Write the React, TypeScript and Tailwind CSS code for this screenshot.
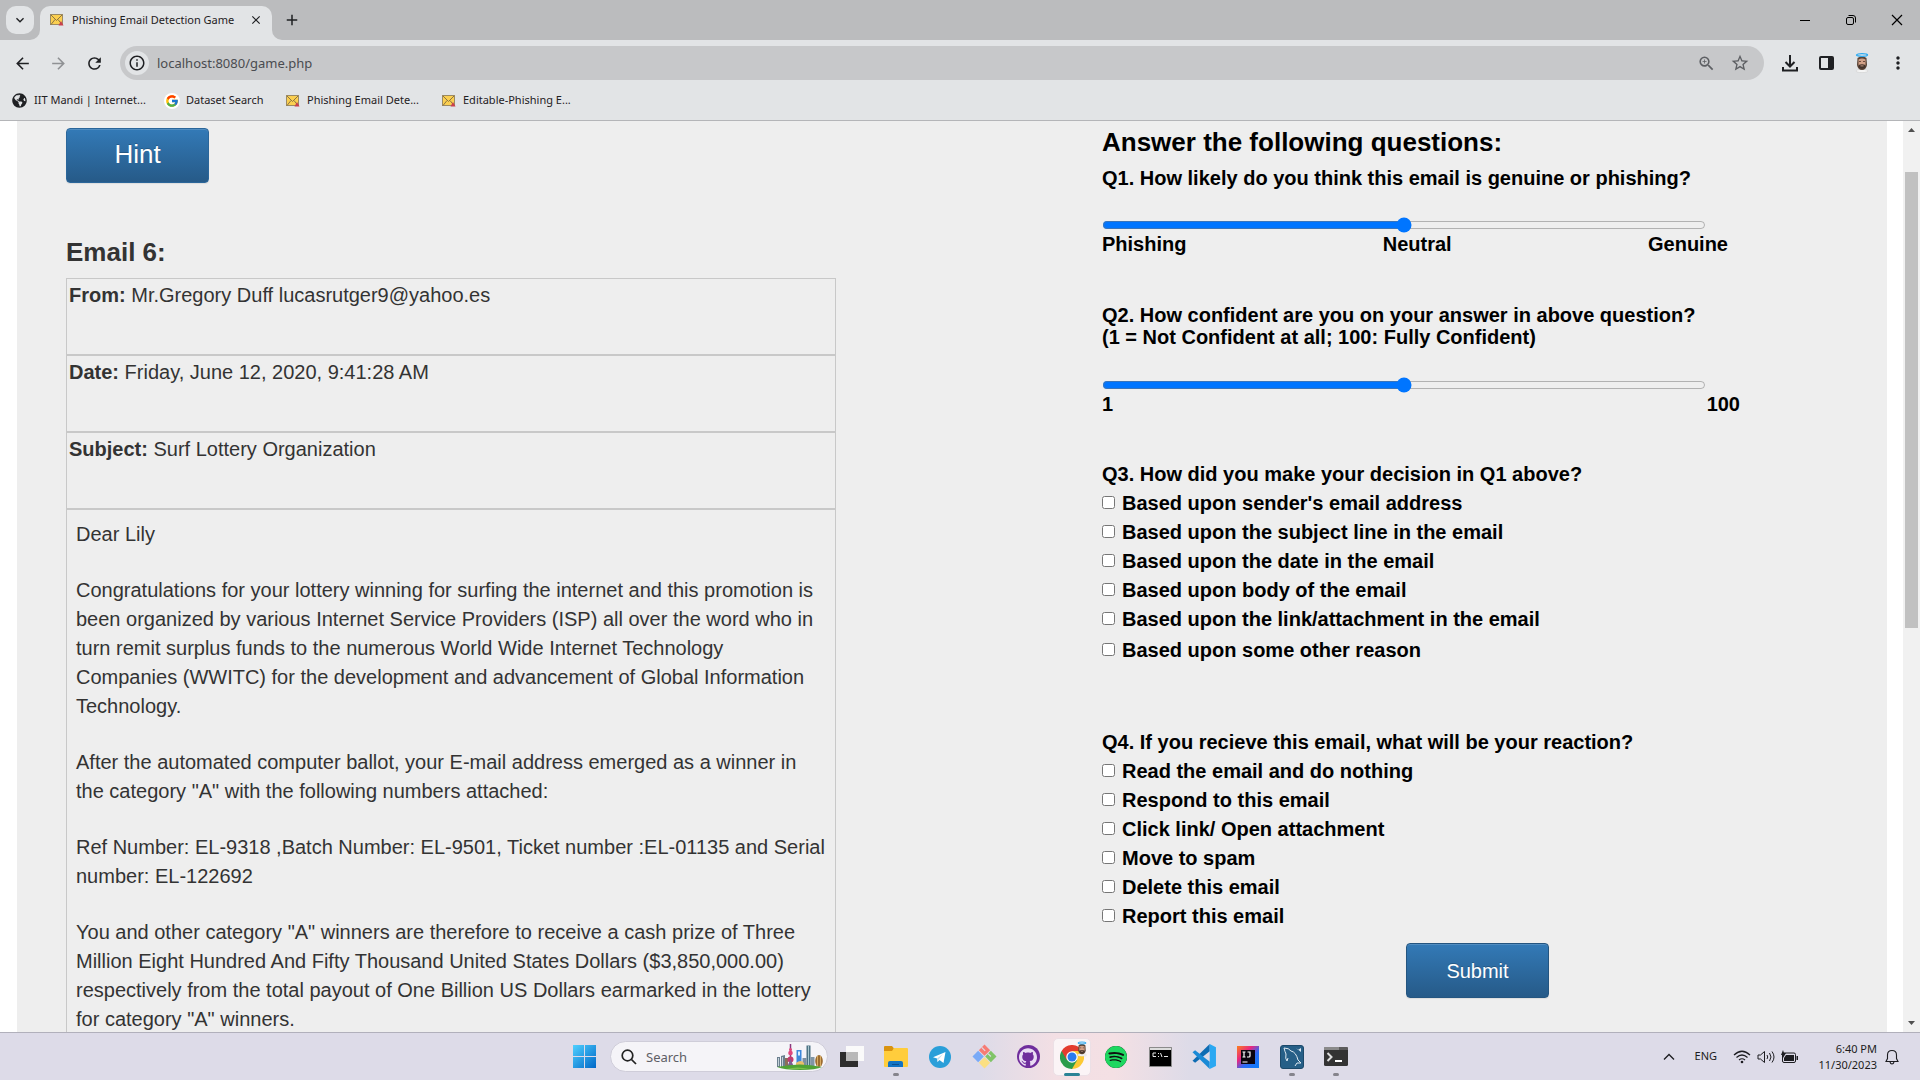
import React from "react";
import { SiSpotify, SiGithub } from "react-icons/si";
import { FcGoogle } from "react-icons/fc";
import { FaGlobeAmericas } from "react-icons/fa";
import {
  MdArrowBack,
  MdArrowForward,
  MdRefresh,
  MdInfoOutline,
  MdOutlineZoomIn,
  MdStarOutline,
  MdMoreVert,
  MdClose,
  MdAdd,
  MdExpandMore,
} from "react-icons/md";

const ui = "font-['Noto_Sans','Open_Sans',sans-serif]";

function MailIcon() {
  return (
    <svg width="14" height="14" viewBox="0 0 14 14" className="shrink-0">
      <rect x="0.5" y="1.5" width="12" height="10" fill="#fbcf50" stroke="#9c8a62" />
      <path d="M1 2l5.500 5.500L12 2M1 11.500l4-5M12 11.500l-4-5" fill="none" stroke="#8b7444" strokeWidth="1" />
      <path d="M11 8l2.500 4.500H8.500z" fill="#c9404d" />
    </svg>
  );
}

function Avatar({ className }: { className?: string }) {
  return (
    <svg width="16" height="20" viewBox="0 0 16 20" className={className}>
      <ellipse cx="8" cy="18" rx="6" ry="1.600" fill="#f5f5f5" stroke="#c9c9c9" strokeWidth="0.500" />
      <path d="M3.500 5q4.500-3.500 9 0l.5 7q-1 5-5 5t-5-5z" fill="#5a4437" />
      <path d="M4.500 6.500q3.500-2 7 0v6q-1 2-3.500 2t-3.500-2z" fill="#d3a188" />
      <path d="M4.500 12q3.500-1.500 7 0v2q-3.500 3.500-7 0z" fill="#43332b" />
      <rect x="5" y="8" width="2" height="1" fill="#6b4a3c" />
      <rect x="9" y="8" width="2" height="1" fill="#6b4a3c" />
      <rect x="6.500" y="12.500" width="3" height="0.800" fill="#d9a890" />
      <ellipse cx="8" cy="2" rx="5.500" ry="1.300" fill="none" stroke="#29a9f2" strokeWidth="1.300" />
    </svg>
  );
}

function TabStrip() {
  return (
    <div className="flex h-10 items-start bg-[#bbbcbe] pt-1.5 pl-1.5 text-[#1f2023]">
      <button aria-label="Search tabs" className="grid size-7 place-items-center rounded-[10px] bg-[#e2e4e6]">
        <MdExpandMore size={16} stroke="currentColor" />
      </button>
      <div className="relative ml-1.5 flex h-[34px] w-[232px] items-center rounded-t-[10px] bg-[#e2e4e6] pr-[9px] pb-1.5 pl-2.5">
        <svg width="10" height="10" className="absolute bottom-0 -left-2.5">
          <path d="M10 0v10H0A10 10 0 0 0 10 0z" fill="#e2e4e6" />
        </svg>
        <svg width="10" height="10" className="absolute -right-2.5 bottom-0">
          <path d="M0 0v10h10A10 10 0 0 1 0 0z" fill="#e2e4e6" />
        </svg>
        <MailIcon />
        <span className="ml-2 flex-1 text-[11px] whitespace-nowrap">Phishing Email Detection Game</span>
        <button aria-label="Close tab">
          <MdClose size={14} />
        </button>
      </div>
      <button aria-label="New tab" className="mt-[5px] ml-[11px]">
        <MdAdd size={18} />
      </button>
      <div className="mr-[15px] ml-auto flex items-center gap-[30px] pt-1.5">
        <button aria-label="Minimize">
          <svg width="16" height="16" viewBox="0 0 16 16">
            <path d="M3 8.500h10" stroke="#000" />
          </svg>
        </button>
        <button aria-label="Restore">
          <svg width="16" height="16" viewBox="0 0 16 16" fill="none" stroke="#000">
            <rect x="3.500" y="5.500" width="7" height="7" rx="1.500" />
            <path d="M5.500 3.500h4.500q2.500 0 2.500 2.500v4.500" />
          </svg>
        </button>
        <button aria-label="Close">
          <svg width="16" height="16" viewBox="0 0 16 16" stroke="#000" strokeWidth="1.200">
            <path d="M3 3l10 10M13 3L3 13" />
          </svg>
        </button>
      </div>
    </div>
  );
}

function Toolbar() {
  return (
    <div className="flex h-[46px] items-center bg-[#e2e4e6] pl-[13px] text-[#1f2023]">
      <button aria-label="Back"><MdArrowBack size={19} /></button>
      <button aria-label="Forward" className="ml-[17px] text-[#8f9194]"><MdArrowForward size={19} /></button>
      <button aria-label="Reload" className="ml-[17px]"><MdRefresh size={19} /></button>
      <div className="ml-4 flex h-[34px] flex-1 items-center rounded-full bg-[#c7c8ca] pr-3.5 pl-[5px]">
        <span className="grid size-6 place-items-center rounded-full bg-[#e2e4e6]">
          <MdInfoOutline size={18} />
        </span>
        <input
          aria-label="Address"
          defaultValue="localhost:8080/game.php"
          className="ml-2 h-6 flex-1 bg-transparent text-[13px] text-[#4a4c50] outline-none"
        />
        <div className="flex items-center gap-3.5 text-[#5d5f63]">
          <MdOutlineZoomIn size={19} />
          <MdStarOutline size={20} />
        </div>
      </div>
      <div className="mr-3 ml-4 flex items-center gap-4">
        <button aria-label="Downloads">
          <svg width="20" height="20" viewBox="0 0 20 20" fill="none" stroke="#1f2023" strokeWidth="2">
            <path d="M10 2v11M5.500 9l4.500 4.500L14.500 9M3 14v3.500h14V14" />
          </svg>
        </button>
        <button aria-label="Side panel">
          <svg width="20" height="20" viewBox="0 0 20 20">
            <rect x="4" y="4" width="13" height="12" rx="1" fill="none" stroke="#1f2023" strokeWidth="2" />
            <path d="M12 4h5v12h-5z" fill="#1f2023" />
          </svg>
        </button>
        <button aria-label="Profile" className="grid w-5 place-items-center"><Avatar /></button>
        <button aria-label="Menu" className="grid w-5 place-items-center"><MdMoreVert size={20} /></button>
      </div>
    </div>
  );
}

function Bookmarks() {
  return (
    <nav className="flex h-[35px] items-center border-b border-[#b4b5b8] bg-[#e2e4e6] pb-[5px] pl-3 text-[11px] whitespace-nowrap text-[#1f2023]">
      <a href="#iit" className="flex w-[152px] items-center gap-[7px]"><FaGlobeAmericas size={15} />IIT Mandi | Internet...</a>
      <a href="#dataset" className="flex w-[122px] items-center gap-1.5">
        <span className="grid size-4 place-items-center rounded-full bg-white"><FcGoogle size={14} /></span>
        Dataset Search
      </a>
      <a href="#phishing" className="flex w-[156px] items-center gap-[7px]"><MailIcon />Phishing Email Dete...</a>
      <a href="#editable" className="flex items-center gap-[7px]"><MailIcon />Editable-Phishing E...</a>
    </nav>
  );
}

const headers = [
  ["From:", "Mr.Gregory Duff lucasrutger9@yahoo.es"],
  ["Date:", "Friday, June 12, 2020, 9:41:28 AM"],
  ["Subject:", "Surf Lottery Organization"],
];

const paragraphs = [
  "Dear Lily",
  "Congratulations for your lottery winning for surfing the internet and this promotion is been organized by various Internet Service Providers (ISP) all over the word who in turn remit surplus funds to the numerous World Wide Internet Technology Companies (WWITC) for the development and advancement of Global Information Technology.",
  "After the automated computer ballot, your E-mail address emerged as a winner in the category \"A\" with the following numbers attached:",
  "Ref Number: EL-9318 ,Batch Number: EL-9501, Ticket number :EL-01135 and Serial number: EL-122692",
  "You and other category \"A\" winners are therefore to receive a cash prize of Three Million Eight Hundred And Fifty Thousand United States Dollars ($3,850,000.00) respectively from the total payout of One Billion US Dollars earmarked in the lottery for category \"A\" winners.",
];

const buttonClass =
  "h-[55px] w-[143px] rounded-[4px] border bg-gradient-to-b from-[#337ab7] to-[#265a88] text-white shadow-[inset_0_1px_0_rgba(255,255,255,0.15),0_1px_1px_rgba(0,0,0,0.075)] [text-shadow:0_-1px_0_rgba(0,0,0,0.2)]";

function EmailColumn() {
  return (
    <section className="w-[770px] text-xl text-[#333]">
      <button className={`${buttonClass} mt-[7px] block border-[#2b669a] pb-0.5 text-[26px]`}>Hint</button>
      <h2 className="mt-[54px] text-[26px] leading-[30px] font-bold">Email 6:</h2>
      <div className="mt-[11px]">
        {headers.map(([name, value]) => (
          <div key={name} className="h-[77px] border border-[#c8c8c8] px-0.5 pt-0.5 leading-[29px]">
            <b>{name}</b> {value}
          </div>
        ))}
        <div className="flex flex-col gap-[27px] border border-[#c8c8c8] px-[9px] pt-2.5 leading-[29px]">
          {paragraphs.map((p) => (
            <p key={p}>{p}</p>
          ))}
        </div>
      </div>
    </section>
  );
}

function CheckList({ name, items }: { name: string; items: string[] }) {
  return (
    <>
      {items.map((item, i) => (
        <label key={item} htmlFor={`${name}-${i}`} className="flex h-[29px] items-center gap-[7px]">
          <input id={`${name}-${i}`} type="checkbox" className="size-[13px]" />
          {item}
        </label>
      ))}
    </>
  );
}

const reasons = [
  "Based upon sender's email address",
  "Based upon the subject line in the email",
  "Based upon the date in the email",
  "Based upon body of the email",
  "Based upon the link/attachment in the email",
];
const reactions = [
  "Read the email and do nothing",
  "Respond to this email",
  "Click link/ Open attachment",
  "Move to spam",
  "Delete this email",
  "Report this email",
];

function QuestionColumn() {
  return (
    <section className="mr-[147px] ml-auto w-[638px] text-xl leading-[22px] font-bold text-black">
      <h2 className="mt-1.5 text-[26px] leading-[30px]">Answer the following questions:</h2>
      <label htmlFor="q1" className="mt-2.5 block">Q1. How likely do you think this email is genuine or phishing?</label>
      <input id="q1" type="range" defaultValue={50} className="mt-7 block h-4 w-[604px]" />
      <div className="flex w-[626px] justify-between">
        <span>Phishing</span>
        <span>Neutral</span>
        <span>Genuine</span>
      </div>
      <label htmlFor="q2" className="mt-[49px] block">
        Q2. How confident are you on your answer in above question?
        <br />
        (1 = Not Confident at all; 100: Fully Confident)
      </label>
      <input id="q2" type="range" defaultValue={50} className="mt-[29px] block h-4 w-[604px]" />
      <div className="flex justify-between">
        <span>1</span>
        <span>100</span>
      </div>
      <fieldset className="mt-12">
        <legend className="mb-[3px]">Q3. How did you make your decision in Q1 above?</legend>
        <CheckList name="q3" items={reasons} />
        <div className="mt-0.5">
          <CheckList name="q3-other" items={["Based upon some other reason"]} />
        </div>
      </fieldset>
      <fieldset className="mt-[67px]">
        <legend className="mb-[3px]">Q4. If you recieve this email, what will be your reaction?</legend>
        <CheckList name="q4" items={reactions} />
      </fieldset>
      <button className={`${buttonClass} mt-[13px] ml-[304px] block border-[#245580] text-xl font-normal`}>Submit</button>
    </section>
  );
}

function Scrollbar() {
  return (
    <div className="flex w-[17px] shrink-0 flex-col items-center bg-[#f1f1f1]">
      <svg width="17" height="17"><path d="M5 11h7L8.500 7z" fill="#505050" /></svg>
      <div className="mt-[34px] h-[456px] w-[13px] bg-[#c1c1c1]" />
      <svg width="17" height="17" className="mt-auto"><path d="M5 6h7l-3.500 4z" fill="#505050" /></svg>
    </div>
  );
}

function AppSlot({ label, running, children }: { label: string; running?: boolean; children: React.ReactNode }) {
  return (
    <button aria-label={label} className="relative grid h-12 w-11 place-items-center">
      {children}
      {running && <span className="absolute bottom-[5px] h-[3px] w-1.5 rounded-full bg-[#85848c]" />}
    </button>
  );
}

function Skyline() {
  return (
    <svg width="46" height="26" viewBox="0 0 46 26">
      <path d="M0 13h3v10H0zM4 12l4-1v12H4z" fill="#6b7f8f" />
      <path d="M8 14h3v9H8z" fill="#8b6f5a" />
      <path d="M1 14h1v8H1zM5 13h1v10H5z" fill="#c6d3da" />
      <path d="M13.500 0v22" stroke="#8a3a80" strokeWidth="1.500" />
      <circle cx="13.500" cy="5.500" r="1.500" fill="#e0457d" />
      <circle cx="13.500" cy="9" r="2.300" fill="#e0457d" />
      <circle cx="13.500" cy="15.500" r="3" fill="#c23a70" />
      <path d="M10 23l3.500-8 3.500 8z" fill="#7b5f92" />
      <path d="M19.500 6h5v17h-5z" fill="#3d88da" />
      <path d="M21 7.500h2v4h-2z" fill="#d9ecff" />
      <path d="M29.500 1.500h4v21h-4z" fill="#4d7384" />
      <path d="M31 2h1v21h-1z" fill="#a9c7cf" />
      <path d="M25.500 14h4v9h-4z" fill="#7b8fa0" />
      <path d="M33.500 13h4v10h-4z" fill="#8195a5" />
      <ellipse cx="42" cy="17" rx="3.800" ry="6" fill="#9c6c30" />
      <path d="M40.500 12v10M43.500 12v10" stroke="#d9ac62" />
      <path d="M19 19q5-4 8 0v4h-8z" fill="#e8bf6a" />
      <path d="M0 23q23-5 45 0-6 3-22 3T0 23z" fill="#4fa235" />
      <path d="M10 25q10-3 22 0z" fill="#7cc04a" />
    </svg>
  );
}

function Taskbar() {
  return (
    <footer className={`relative flex h-12 shrink-0 items-center border-t border-[#b1b0bb] bg-[linear-gradient(90deg,#dddbe8_0%,#dddbe8_51%,#f3dfe4_55%,#f4e0e4_58%,#dddbe8_62%,#dddbe8_100%)] pl-[573px] text-[#1c1c20] ${ui}`}>
      <button aria-label="Start">
        <svg width="23" height="23" viewBox="0 0 23 23">
          <defs>
            <linearGradient id="win" x2="1" y2="1">
              <stop stopColor="#4fd0ff" />
              <stop offset="1" stopColor="#0067c7" />
            </linearGradient>
          </defs>
          <path d="M0 0h11v11H0zM12 0h11v11H12zM0 12h11v11H0zM12 12h11v11H12z" fill="url(#win)" />
        </svg>
      </button>
      <div className="ml-3.5 flex h-[31px] w-[218px] items-center rounded-full border border-[#cfcdd9] bg-[#f5f4f8] pr-1 pl-2.5">
        <svg width="16" height="16" viewBox="0 0 16 16" fill="none" stroke="#222" strokeWidth="1.700">
          <circle cx="6.500" cy="6.500" r="5.300" />
          <path d="M10.500 10.500l4.500 4.500" />
        </svg>
        <input aria-label="Search" placeholder="Search" className="ml-[9px] h-5 w-0 flex-1 bg-transparent text-[13px] outline-none placeholder:text-[#5e5e66]" />
        <Skyline />
      </div>
      <div className="ml-0.5 flex">
        <AppSlot label="Task view">
          <svg width="24" height="23" viewBox="0 0 24 23">
            <path d="M0 7h18v15H0z" fill="#2d2d2d" />
            <path d="M6 1h18v15H6z" fill="#fafafa" />
            <path d="M6 7h12v9H6z" fill="#b9b9b9" />
          </svg>
        </AppSlot>
        <AppSlot label="File Explorer" running>
          <svg width="24" height="22" viewBox="0 0 24 22">
            <path d="M0 1q0-1 1-1h7l2 2.500V6H0z" fill="#d9930f" />
            <path d="M0 5h8l2-3h13q1 0 1 1v17q0 1-1 1H1q-1 0-1-1z" fill="#ffcd3c" />
            <path d="M4 21v-4q0-2 2-2h11q2 0 2 2v4z" fill="#1173c4" />
            <path d="M8 18h7v1H8z" fill="#0a4f8f" />
          </svg>
        </AppSlot>
        <AppSlot label="Telegram">
          <svg width="22" height="22" viewBox="0 0 22 22">
            <circle cx="11" cy="11" r="11" fill="#2a9fd9" />
            <path d="M4 11.200L16.500 6l-2 11-4-3-2 2-.5-3.500z" fill="#fff" />
            <path d="M8 12.500l6-4.500-4.500 5.500-1 2.500z" fill="#bfe0f2" />
          </svg>
        </AppSlot>
        <AppSlot label="Git">
          <svg width="25" height="25" viewBox="0 0 25 25">
            <g transform="rotate(45 12.500 12.500)">
              <rect x="4" y="4" width="8" height="8" fill="#f77c74" />
              <rect x="13" y="4" width="8" height="8" fill="#80c467" />
              <rect x="4" y="13" width="8" height="8" fill="#79aaf7" />
              <rect x="13" y="13" width="8" height="8" fill="#fbdf82" />
              <path d="M4 8h5M13 8h4" stroke="#dddbe8" strokeWidth="1.200" />
            </g>
          </svg>
        </AppSlot>
        <AppSlot label="GitHub Desktop">
          <span className="grid size-[23px] place-items-center rounded-full bg-[#6f2d9c]">
            <SiGithub size={18} color="#e9dcf3" />
          </span>
        </AppSlot>
        <button aria-label="Chrome" className="relative grid h-12 w-11 place-items-center">
          <span className="relative grid h-[38px] w-[38px] place-items-center rounded-[5px] border border-[#ece0e6] bg-[#fbf4f6]">
            <svg width="24" height="24" viewBox="0 0 48 48">
              <path d="M24 24L3.200 12A24 24 0 0 1 44.800 12z" fill="#e33b2e" />
              <path d="M24 24L44.800 12A24 24 0 0 1 24 48z" fill="#fcc934" />
              <path d="M24 24v24A24 24 0 0 1 3.200 12z" fill="#2b9c4b" />
              <path d="M24 12h20.800L34.400 30z" fill="#fcc934" />
              <path d="M34.400 30L24 48 13.600 30z" fill="#2b9c4b" />
              <path d="M3.200 12h41.600H24L13.600 30z" fill="#e33b2e" />
              <circle cx="24" cy="24" r="11.500" fill="#fff" />
              <circle cx="24" cy="24" r="9" fill="#2b7bee" />
            </svg>
            <Avatar className="absolute top-0.5 right-0.5 h-4 w-3" />
          </span>
          <span className="absolute bottom-[5px] h-[3px] w-4 rounded-full bg-[#2b8396]" />
        </button>
        <AppSlot label="Spotify">
          <span className="grid size-[22px] place-items-center rounded-full bg-[#101010]">
            <SiSpotify size={22} color="#1ed760" />
          </span>
        </AppSlot>
        <AppSlot label="Command Prompt">
          <svg width="23" height="20" viewBox="0 0 23 20">
            <path d="M.5.500h22v19H.500z" fill="#000" stroke="#8b8b8b" />
            <path d="M1 1h21v2H1z" fill="#dcdcdc" />
            <path d="M7 6H4v3.500h3M9.500 6v1M9.500 9v1M11.500 6l1.500 4M15 9.500h4" fill="none" stroke="#e8e8e8" />
          </svg>
        </AppSlot>
        <AppSlot label="Visual Studio Code">
          <svg width="25" height="25" viewBox="0 0 24 24">
            <path d="M17 0v7L3 18l-2.500-2z" fill="#0e6cb3" />
            <path d="M17 24v-7L3 6 .5 8z" fill="#1a8ad6" />
            <path d="M17 0l6 3v18l-6 3z" fill="#2aa8f2" />
          </svg>
        </AppSlot>
        <AppSlot label="IntelliJ IDEA">
          <svg width="22" height="22" viewBox="0 0 22 22">
            <defs>
              <linearGradient id="ij" x2="1" y2="1">
                <stop stopColor="#fc801d" />
                <stop offset="0.350" stopColor="#e8267f" />
                <stop offset="0.600" stopColor="#2f6bf6" />
                <stop offset="1" stopColor="#087cfa" />
              </linearGradient>
            </defs>
            <path d="M0 0h22v22H0z" fill="url(#ij)" />
            <path d="M4 4h14v14H4z" fill="#0b0410" />
            <path d="M5.500 6h3M7 6v5M5.500 11h3M10.500 6H13v4q0 1-1 1h-2M5.500 16h5" fill="none" stroke="#fff" strokeWidth="1.200" />
          </svg>
        </AppSlot>
        <AppSlot label="MySQL Workbench" running>
          <svg width="24" height="24" viewBox="0 0 24 24" fill="none">
            <rect x="0.500" y="0.500" width="23" height="23" rx="2.500" fill="#265f87" stroke="#1c496a" />
            <path d="M4 3q5 0 7 3 5 1 7 9l3 3-4 0-2 3M4 3q1 4 2 6-1 5 1 7l1-3" stroke="#dfeaf2" />
            <path d="M16 3l2 2 3-2v4z" fill="#dfeaf2" />
          </svg>
        </AppSlot>
        <AppSlot label="Terminal" running>
          <svg width="24" height="19" viewBox="0 0 24 19" fill="none">
            <rect width="24" height="19" rx="1.500" fill="#333" />
            <path d="M1 0h14v3H0V1z" fill="#8a8a8a" />
            <path d="M15 0h8l1 1v2h-9z" fill="#5c5c5c" />
            <path d="M3.500 6l4 4-4 4" stroke="#ddd" strokeWidth="2" />
            <path d="M11 14h7" stroke="#fff" strokeWidth="2" />
          </svg>
        </AppSlot>
      </div>
      <div className="mr-[21px] ml-auto flex items-center">
        <svg width="12" height="8" viewBox="0 0 12 8" fill="none" stroke="#1c1c20" strokeWidth="1.300">
          <path d="M1 6.500l5-5 5 5" />
        </svg>
        <span className="ml-5 text-[11px]">ENG</span>
        <svg width="18" height="14" viewBox="0 0 18 14" fill="none" stroke="#1c1c20" strokeWidth="1.200" className="ml-4">
          <path d="M1 5q8-7.500 16 0M3.500 7.500q5.500-5 11 0M6 10q3-2.500 6 0" />
          <circle cx="9" cy="12" r="1.300" fill="#1c1c20" stroke="none" />
        </svg>
        <svg width="18" height="14" viewBox="0 0 18 14" fill="none" stroke="#1c1c20" className="ml-1.5">
          <path d="M1 5h2.500L7.500 1.500v11L3.500 9H1zM10 5q1.500 2 0 4M12.500 3q3 4 0 8M15 1.500q4 5.500 0 11" />
        </svg>
        <svg width="18" height="14" viewBox="0 0 18 14" fill="#1c1c20" className="ml-1.5">
          <rect x="1.500" y="3" width="13" height="9.500" rx="1.500" fill="none" stroke="#1c1c20" />
          <path d="M5 5h8v6H3V8zM15.500 6h1.500v4h-1.500zM2 0l-2 5h2v3l3-5H3z" />
        </svg>
        <div className="ml-3 w-[66px] text-right text-[11px] leading-4 whitespace-nowrap">
          <div>6:40 PM</div>
          <div>11/30/2023</div>
        </div>
        <svg width="14" height="16" viewBox="0 0 14 16" fill="none" stroke="#1c1c20" strokeWidth="1.100" className="ml-2">
          <path d="M1 12.500h12l-1.500-3V6q0-4.500-4.500-4.500T2.500 6v3.500zM5 13q.5 2 2 2t2-2" />
        </svg>
      </div>
    </footer>
  );
}

export default function App() {
  return (
    <div className="flex h-screen flex-col overflow-hidden">
      <header className={ui}>
        <TabStrip />
        <Toolbar />
        <Bookmarks />
      </header>
      <div className="flex min-h-0 flex-1 bg-white">
        <main className="mr-4 ml-[17px] flex min-w-0 flex-1 items-start overflow-hidden bg-[#eee] pl-[49px] font-['Liberation_Sans',Arial,sans-serif]">
          <EmailColumn />
          <QuestionColumn />
        </main>
        <Scrollbar />
      </div>
      <Taskbar />
    </div>
  );
}
